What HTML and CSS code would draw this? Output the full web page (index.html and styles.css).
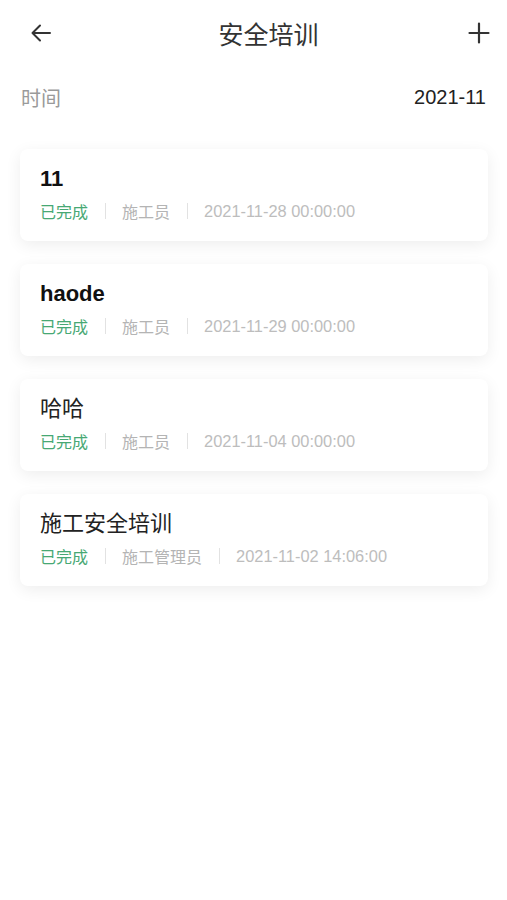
FILE: index.html
```html
<!DOCTYPE html>
<html lang="zh">
<head>
<meta charset="utf-8">
<link rel="stylesheet" href="styles.css">
</head>
<body>
<div class="page">
  <header class="nav">
    <svg class="icon back" width="24" height="24" viewBox="0 0 24 24"><path d="M21 12H3.5M11 4.5L3.5 12L11 19.5" fill="none" stroke="#333" stroke-width="2" stroke-linecap="round" stroke-linejoin="round"/></svg>
    <div class="nav-title">安全培训</div>
    <svg class="icon plus" width="22" height="22" viewBox="0 0 22 22"><path d="M11 1.5V20.5M1.5 11H20.5" fill="none" stroke="#333" stroke-width="2.2" stroke-linecap="round"/></svg>
  </header>
  <div class="filter">
    <span class="filter-label">时间</span>
    <span class="filter-value">2021-11</span>
  </div>
  <div class="list">
    <div class="card">
      <div class="card-title bold">11</div>
      <div class="meta"><span class="status">已完成</span><span class="sep"></span><span class="role">施工员</span><span class="sep"></span><span class="date">2021-11-28 00:00:00</span></div>
    </div>
    <div class="card">
      <div class="card-title bold">haode</div>
      <div class="meta"><span class="status">已完成</span><span class="sep"></span><span class="role">施工员</span><span class="sep"></span><span class="date">2021-11-29 00:00:00</span></div>
    </div>
    <div class="card">
      <div class="card-title">哈哈</div>
      <div class="meta"><span class="status">已完成</span><span class="sep"></span><span class="role">施工员</span><span class="sep"></span><span class="date">2021-11-04 00:00:00</span></div>
    </div>
    <div class="card">
      <div class="card-title">施工安全培训</div>
      <div class="meta"><span class="status">已完成</span><span class="sep"></span><span class="role">施工管理员</span><span class="sep"></span><span class="date">2021-11-02 14:06:00</span></div>
    </div>
  </div>
</div>
</body>
</html>
```
FILE: styles.css
```css
* { box-sizing: border-box; }
html, body { margin: 0; padding: 0; background: #fff; }
body {
  font-family: "Liberation Sans", Roboto, "Noto Sans CJK SC", sans-serif;
  color: #333;
}
.page { width: 507px; min-height: 900px; background: #fff; }
.nav {
  height: 68px;
  display: flex;
  align-items: center;
  padding: 0 17px 0 29px;
}
.icon { display: block; flex: none; }
.back { margin-top: -2px; }
.plus { margin-top: -3px; }
.nav-title {
  flex: 1;
  text-align: center;
  font-size: 25px;
  color: #333;
  padding-left: 16px;
  line-height: 30px;
  margin-top: 2px;
}
.filter {
  height: 58px;
  display: flex;
  align-items: center;
  justify-content: space-between;
  padding: 0 21px 0 21px;
}
.filter-label { font-size: 20px; color: #9a9a9a; }
.filter-value { font-size: 20px; color: #222; }
.list { padding: 23px 19px 0 20px; }
.card {
  height: 92px;
  background: #fff;
  border-radius: 8px;
  box-shadow: 0 4px 16px rgba(0, 0, 0, 0.07);
  padding: 15px 20px 0 20px;
  margin-bottom: 23px;
}
.card-title {
  font-size: 22px;
  line-height: 30px;
  color: #222;
}
.card-title.bold { font-weight: bold; color: #111; }
.meta {
  display: flex;
  align-items: center;
  margin-top: 5px;
  height: 24px;
  font-size: 16px;
}
.status { color: #47a874; }
.role { color: #b4b4b4; }
.date { color: #bdbdbd; font-size: 16.4px; }
.sep {
  width: 1px;
  height: 16px;
  background: #e2e2e2;
  margin: 0 16px 0 17px;
}
```
